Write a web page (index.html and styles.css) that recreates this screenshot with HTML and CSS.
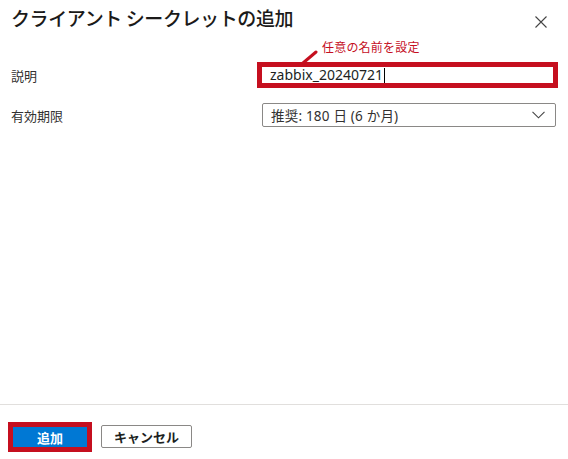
FILE: index.html
```html
<!DOCTYPE html>
<html lang="ja">
<head>
<meta charset="utf-8">
<title>クライアント シークレットの追加</title>
<link rel="stylesheet" href="styles.css">
</head>
<body>
<div class="panel">
  <header class="header">
    <h1 class="title">クライアント シークレットの追加</h1>
    <button class="close" aria-label="閉じる">
      <svg width="12" height="12" viewBox="0 0 12 12"><path d="M0.5 0.5 L11.5 11.5 M11.5 0.5 L0.5 11.5" stroke="#444" stroke-width="1.1" fill="none"/></svg>
    </button>
  </header>
  <div class="form">
    <label class="label">説明</label>
    <div class="control hl">
      <div class="annot">
        <svg class="annot-line" width="20" height="16" viewBox="0 0 20 16"><path d="M3 14 L16 3" stroke="#c50f1f" stroke-width="3" stroke-linecap="round" fill="none"/></svg>
        <span class="annot-text">任意の名前を設定</span>
      </div>
      <div class="input"><span class="value">zabbix_20240721</span><span class="caret"></span></div>
    </div>
    <label class="label">有効期限</label>
    <div class="control select">
      <span class="select-text">推奨: 180 日 (6 か月)</span>
      <svg class="chev" width="13" height="8" viewBox="0 0 13 8"><path d="M0.5 0.8 L6.5 6.8 L12.5 0.8" stroke="#444" stroke-width="1.1" fill="none"/></svg>
    </div>
  </div>
  <footer class="footer">
    <div class="hl-btn"><button class="btn primary">追加</button></div>
    <button class="btn secondary">キャンセル</button>
  </footer>
</div>
</body>
</html>
```
FILE: styles.css
```css
* { box-sizing: border-box; }
html, body { margin: 0; padding: 0; background: #fff; }
body {
  font-family: "Noto Sans", "Noto Sans CJK JP", sans-serif;
  color: #323130;
}
.panel {
  height: 459px;
  display: flex;
  flex-direction: column;
}
.header {
  display: flex;
  align-items: flex-start;
  justify-content: space-between;
  padding: 4px 21px 0 11px;
  height: 62px;
}
.title {
  margin: 0;
  font-family: "Noto Sans CJK JP", sans-serif;
  font-size: 19px;
  font-weight: 500;
  letter-spacing: -0.4px;
  color: #1b1a19;
  line-height: 28px;
}
.close {
  border: 0;
  background: none;
  padding: 0;
  margin-top: 12px;
  width: 12px;
  height: 12px;
  display: block;
}
.close svg { display: block; }
.form {
  display: grid;
  grid-template-columns: 251px 294px;
  row-gap: 15px;
  padding-left: 11px;
  align-items: center;
}
.label {
  font-family: "Noto Sans CJK JP", sans-serif;
  font-size: 13px;
  color: #323130;
}
.control { position: relative; }
.hl {
  margin: 0 -2px 0 -5px;
  border: 5px solid #c50f1f;
  height: 26px;
}
.input {
  height: 16px;
  display: flex;
  align-items: center;
  padding-left: 8px;
  background: #fff;
}
.value {
  font-family: "Noto Sans", sans-serif;
  font-size: 14px;
  color: #201f1e;
  line-height: 16px;
}
.caret {
  display: inline-block;
  width: 1px;
  height: 15px;
  background: #000;
  margin-left: 1px;
}
.annot {
  position: absolute;
  left: 38px;
  top: -27px;
  display: flex;
  align-items: flex-start;
}
.annot-line { display: block; margin-top: 9px; margin-right: 2px; }
.annot-text {
  font-family: "Noto Sans CJK JP", sans-serif;
  font-size: 12px;
  color: #c50f1f;
  line-height: 14px;
  letter-spacing: 0.2px;
}
.select {
  height: 24px;
  border: 1px solid #8a8886;
  border-radius: 2px;
  display: flex;
  align-items: center;
  justify-content: space-between;
  padding: 0 10px 0 8px;
}
.select-text {
  font-family: "Noto Sans", "Noto Sans CJK JP", sans-serif;
  font-size: 13.5px;
  letter-spacing: 0.2px;
  color: #323130;
}
.chev { display: block; }
.footer {
  margin-top: auto;
  border-top: 1px solid #e1dfdd;
  padding: 17px 8px 7px;
  display: flex;
  align-items: center;
  gap: 9px;
  height: 55px;
}
.hl-btn {
  border: 5px solid #c50f1f;
  width: 84px;
  height: 30px;
}
.btn {
  font-family: "Noto Sans CJK JP", sans-serif;
  font-size: 13px;
  font-weight: 700;
  cursor: pointer;
}
.primary {
  display: block;
  width: 100%;
  height: 100%;
  background: #0078d4;
  color: #fff;
  border: 0;
  padding: 0;
}
.secondary {
  width: 91px;
  height: 23px;
  background: #fff;
  color: #201f1e;
  border: 1px solid #8a8886;
  border-radius: 2px;
  padding: 0;
  margin-top: -1px;
}
```
